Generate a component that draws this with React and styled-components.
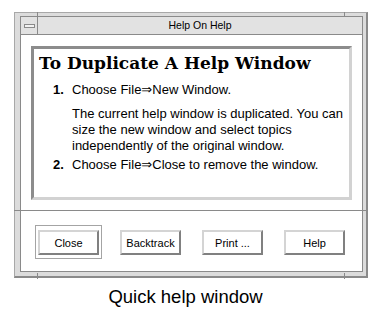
import React from "react";
import styled, { createGlobalStyle } from "styled-components";

const GlobalStyle = createGlobalStyle`
  html, body {
    margin: 0;
    padding: 0;
    background: #fff;
  }
  body {
    font-family: "Liberation Sans", "DejaVu Sans", Arial, sans-serif;
    color: #000;
  }
`;

const Page = styled.div`
  width: 384px;
  height: 320px;
  box-sizing: border-box;
  padding: 12px 0 0 14px;
`;

const Frame = styled.div`
  position: relative;
  width: 354px;
  box-sizing: border-box;
  background: #dcdcdc;
  border-style: solid;
  border-width: 1px 2px 2px 1px;
  border-color: #a8a8a8 #8a8a8a #8a8a8a #a8a8a8;
  padding: 3px 3px 4px 5px;
`;

// resize handle marks cut into the frame band
const Notch = styled.span`
  position: absolute;
  background: #8a8a8a;
  left: ${p => p.x}px;
  top: ${p => p.y}px;
  width: ${p => (p.horizontal ? p.len : 1)}px;
  height: ${p => (p.horizontal ? 1 : p.len)}px;
`;

const Panel = styled.div`
  display: flex;
  flex-direction: column;
  border: 1px solid #8a8a8a;
  background: #fff;
`;

const TitleBar = styled.div`
  display: flex;
  height: 17px;
  background: #e2e2e2;
  border-bottom: 1px solid #8a8a8a;
`;

const MinButton = styled.div`
  width: 16px;
  display: flex;
  align-items: center;
  justify-content: center;
  border-right: 1px solid #8a8a8a;
`;

const MinGlyph = styled.span`
  display: block;
  width: 11px;
  height: 4px;
  box-sizing: border-box;
  margin: 1px 0 0 1px;
  border: 1px solid #8a8a8a;
  background: #f2f2f2;
`;

const Title = styled.div`
  flex: 1;
  text-align: center;
  font-size: 10.5px;
  line-height: 17px;
`;

const Content = styled.div`
  padding: 11px 10px 10px;
`;

const HelpBox = styled.div`
  height: 154px;
  box-sizing: border-box;
  border-style: solid;
  border-width: 3px;
  border-color: #8c8c8c #d2d2d2 #d2d2d2 #8c8c8c;
  padding: 4px 6px 0 5px;
`;

const Heading = styled.h1`
  margin: 0;
  font-family: "DejaVu Serif", "Liberation Serif", serif;
  font-weight: bold;
  font-size: 17px;
  line-height: 21px;
`;

const Step = styled.div`
  display: flex;
  margin-top: ${p => p.gap}px;
  padding-left: 14px;
  font-size: 13px;
  line-height: 16px;
`;

const StepNum = styled.span`
  width: 19px;
  font-weight: bold;
`;

const Note = styled.p`
  margin: 8px 0 0 33px;
  font-size: 13px;
  line-height: 16px;
`;

const ButtonBar = styled.div`
  height: 61px;
  box-sizing: border-box;
  border-top: 1px solid #8a8a8a;
  padding: 19px 17px 0;
  display: flex;
  justify-content: space-between;
  align-items: flex-start;
`;

const Button = styled.button`
  position: relative;
  width: 61px;
  height: 25px;
  box-sizing: border-box;
  padding: 0;
  background: #fff;
  border-style: solid;
  border-width: 2px;
  border-color: #d4d4d4 #808080 #808080 #d4d4d4;
  font-family: "Liberation Sans", "DejaVu Sans", Arial, sans-serif;
  font-size: 11px;
  color: #000;

  ${p =>
    p.isDefault &&
    `
    &::after {
      content: "";
      position: absolute;
      top: -7px;
      left: -5px;
      right: -5px;
      bottom: -6px;
      border: 1px solid #a4a4a4;
    }
  `}
`;

const Caption = styled.div`
  margin-top: 9px;
  padding-right: 27px;
  text-align: center;
  font-size: 18.5px;
  line-height: 20px;
`;

export default function App() {
  return (
    <>
      <GlobalStyle />
      <Page>
        <Frame>
          <Notch x={22} y={-1} len={4} />
          <Notch x={329} y={-1} len={4} />
          <Notch x={22} y={260} len={6} />
          <Notch x={329} y={260} len={6} />
          <Notch horizontal x={-1} y={197} len={6} />
          <Notch horizontal x={348} y={197} len={5} />
          <Panel>
            <TitleBar>
              <MinButton>
                <MinGlyph />
              </MinButton>
              <Title>Help On Help</Title>
            </TitleBar>
            <Content>
              <HelpBox>
                <Heading>To Duplicate A Help Window</Heading>
                <Step gap={8}>
                  <StepNum>1.</StepNum>
                  <span>Choose File⇒New Window.</span>
                </Step>
                <Note>
                  The current help window is duplicated. You can
                  <br />
                  size the new window and select topics
                  <br />
                  independently of the original window.
                </Note>
                <Step gap={3}>
                  <StepNum>2.</StepNum>
                  <span>Choose File⇒Close to remove the window.</span>
                </Step>
              </HelpBox>
            </Content>
            <ButtonBar>
              <Button isDefault>Close</Button>
              <Button>Backtrack</Button>
              <Button>Print ...</Button>
              <Button>Help</Button>
            </ButtonBar>
          </Panel>
        </Frame>
        <Caption>Quick help window</Caption>
      </Page>
    </>
  );
}
